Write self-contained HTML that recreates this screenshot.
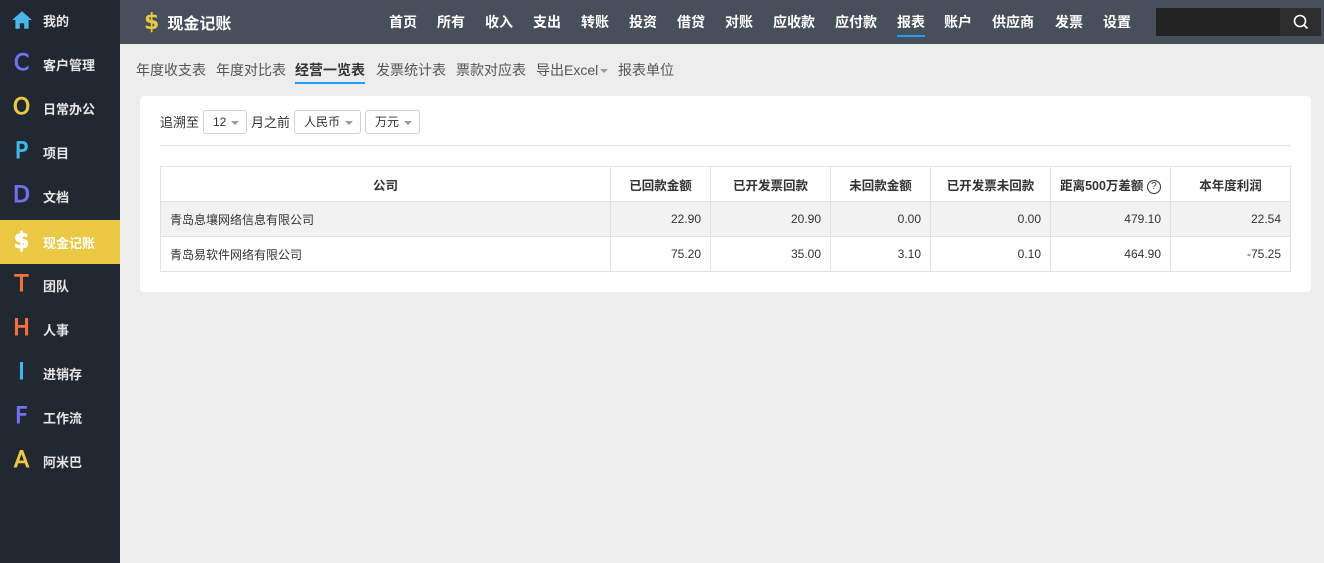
<!DOCTYPE html>
<html><head><meta charset="utf-8"><style>
*{margin:0;padding:0;box-sizing:border-box}
body{width:1324px;height:563px;background:#ededed;font-family:"Liberation Sans","Noto Sans CJK SC",sans-serif;position:relative;overflow:hidden;font-size:13px;color:#333}
.side{position:absolute;left:0;top:0;width:120px;height:563px;background:#222831}
.si{position:absolute;left:0;width:120px;height:44px;display:flex;align-items:center;color:#e6e6e6;font-weight:bold;font-size:13px}
.si b{width:43px;text-align:center;font-size:22px;font-family:"DejaVu Sans",sans-serif;font-weight:normal;line-height:44px;-webkit-text-stroke:0.9px currentColor}
.si.act{background:#ebc844;color:#fff}
.hdr{position:absolute;left:120px;top:0;width:1204px;height:44px;background:#464f5a}
.logo{position:absolute;left:24px;top:0;height:44px;display:flex;align-items:center;color:#fff;font-size:16px;font-weight:bold}
.nav{position:absolute;top:0;height:44px;line-height:44px;color:#fff;font-size:14px;font-weight:bold}
.nav.on:after{content:"";position:absolute;left:0;right:0;bottom:7px;height:2px;background:#1e9fff}
.srch{position:absolute;left:1156px;top:8px;width:124px;height:28px;background:#232323}
.sbtn{position:absolute;left:1280px;top:8px;width:41px;height:28px;background:#2d2d2d}
.tab{position:absolute;top:60px;font-size:14px;color:#555;height:24px;line-height:20px}
.tab.on{color:#333;font-weight:bold;border-bottom:2px solid #1e9fff}
.card{position:absolute;left:140px;top:96px;width:1171px;height:196px;background:#fff;border-radius:4px}
.sel{position:absolute;top:14px;height:24px;border:1px solid #d2d2d2;border-radius:3px;font-size:12px;line-height:22px;padding-left:9px;color:#333}
.sel:after{content:"";position:absolute;right:7px;top:10px;border:4px solid transparent;border-top-color:#999}
table{position:absolute;left:20px;top:70px;border-collapse:collapse;font-size:12px;table-layout:fixed}
td,th{border:1px solid #e2e2e2;height:35px;padding:0 9px;white-space:nowrap;overflow:hidden}
th{font-weight:bold;text-align:center;color:#333;font-size:12.5px}
td{text-align:right;color:#333}
tr.g td{background:#f2f2f2}
</style></head><body>
<div class="side">
<div class="si" style="top:-2px"><b style="color:#4db6e8;-webkit-text-stroke:0"><svg width="22" height="20" viewBox="0 0 20 18" style="vertical-align:-4px"><path d="M10 1L1 9h3v8h4v-5h4v5h4V9h3z" fill="#4db6e8"/></svg></b>我的</div>
<div class="si" style="top:42px"><b style="color:#7070f0">C</b>客户管理</div>
<div class="si" style="top:86px"><b style="color:#ebc844">O</b>日常办公</div>
<div class="si" style="top:130px"><b style="color:#3fb8e6">P</b>项目</div>
<div class="si" style="top:174px"><b style="color:#7070f0">D</b>文档</div>
<div class="si act" style="top:220px"><b style="color:#fff;font-weight:bold">$</b>现金记账</div>
<div class="si" style="top:263px"><b style="color:#f07040">T</b>团队</div>
<div class="si" style="top:307px"><b style="color:#f07040">H</b>人事</div>
<div class="si" style="top:351px"><b style="color:#3fb8e6">I</b>进销存</div>
<div class="si" style="top:395px"><b style="color:#7070f0">F</b>工作流</div>
<div class="si" style="top:439px"><b style="color:#ebc844">A</b>阿米巴</div>
</div>
<div class="hdr">
<div class="logo"><span style="color:#ebc844;font-size:22px;font-family:'DejaVu Sans';margin-right:8px">$</span>现金记账</div>
</div>
<div class="nav" style="left:389px">首页</div>
<div class="nav" style="left:437px">所有</div>
<div class="nav" style="left:485px">收入</div>
<div class="nav" style="left:533px">支出</div>
<div class="nav" style="left:581px">转账</div>
<div class="nav" style="left:629px">投资</div>
<div class="nav" style="left:677px">借贷</div>
<div class="nav" style="left:725px">对账</div>
<div class="nav" style="left:773px">应收款</div>
<div class="nav" style="left:835px">应付款</div>
<div class="nav on" style="left:897px">报表</div>
<div class="nav" style="left:944px">账户</div>
<div class="nav" style="left:992px">供应商</div>
<div class="nav" style="left:1055px">发票</div>
<div class="nav" style="left:1103px">设置</div>
<div class="srch"></div>
<div class="sbtn"><svg width="41" height="28" viewBox="0 0 41 28"><circle cx="20" cy="13" r="5.5" fill="none" stroke="#fff" stroke-width="1.6"/><path d="M24 17l3.5 3.5" stroke="#fff" stroke-width="1.8"/></svg></div>
<div class="tab" style="left:136px">年度收支表</div>
<div class="tab" style="left:216px">年度对比表</div>
<div class="tab on" style="left:295px">经营一览表</div>
<div class="tab" style="left:376px">发票统计表</div>
<div class="tab" style="left:456px">票款对应表</div>
<div class="tab" style="left:536px">导出Excel<span style="display:inline-block;border:4px solid transparent;border-top-color:#999;vertical-align:-2px;margin-left:2px"></span></div>
<div class="tab" style="left:618px">报表单位</div>
<div class="card">
<div style="position:absolute;left:20px;top:16px;font-size:13px">追溯至</div>
<div class="sel" style="left:63px;width:44px">12</div>
<div style="position:absolute;left:111px;top:16px;font-size:13px">月之前</div>
<div class="sel" style="left:154px;width:67px">人民币</div>
<div class="sel" style="left:225px;width:55px">万元</div>
<div style="position:absolute;left:20px;top:49px;width:1131px;height:1px;background:#e2e2e2"></div>
<table>
<colgroup><col style="width:450px"><col style="width:100px"><col style="width:120px"><col style="width:100px"><col style="width:120px"><col style="width:120px"><col style="width:120px"></colgroup>
<tr><th>公司</th><th>已回款金额</th><th>已开发票回款</th><th>未回款金额</th><th>已开发票未回款</th><th style="padding:0">距离500万差额 <span style="display:inline-block;width:14px;height:14px;border:1px solid #333;border-radius:50%;font-size:10px;line-height:12px;vertical-align:1px;font-weight:normal">?</span></th><th>本年度利润</th></tr>
<tr class="g"><td style="text-align:left">青岛息壤网络信息有限公司</td><td>22.90</td><td>20.90</td><td>0.00</td><td>0.00</td><td>479.10</td><td>22.54</td></tr>
<tr><td style="text-align:left">青岛易软件网络有限公司</td><td>75.20</td><td>35.00</td><td>3.10</td><td>0.10</td><td>464.90</td><td>-75.25</td></tr>
</table>
</div>
</body></html>
